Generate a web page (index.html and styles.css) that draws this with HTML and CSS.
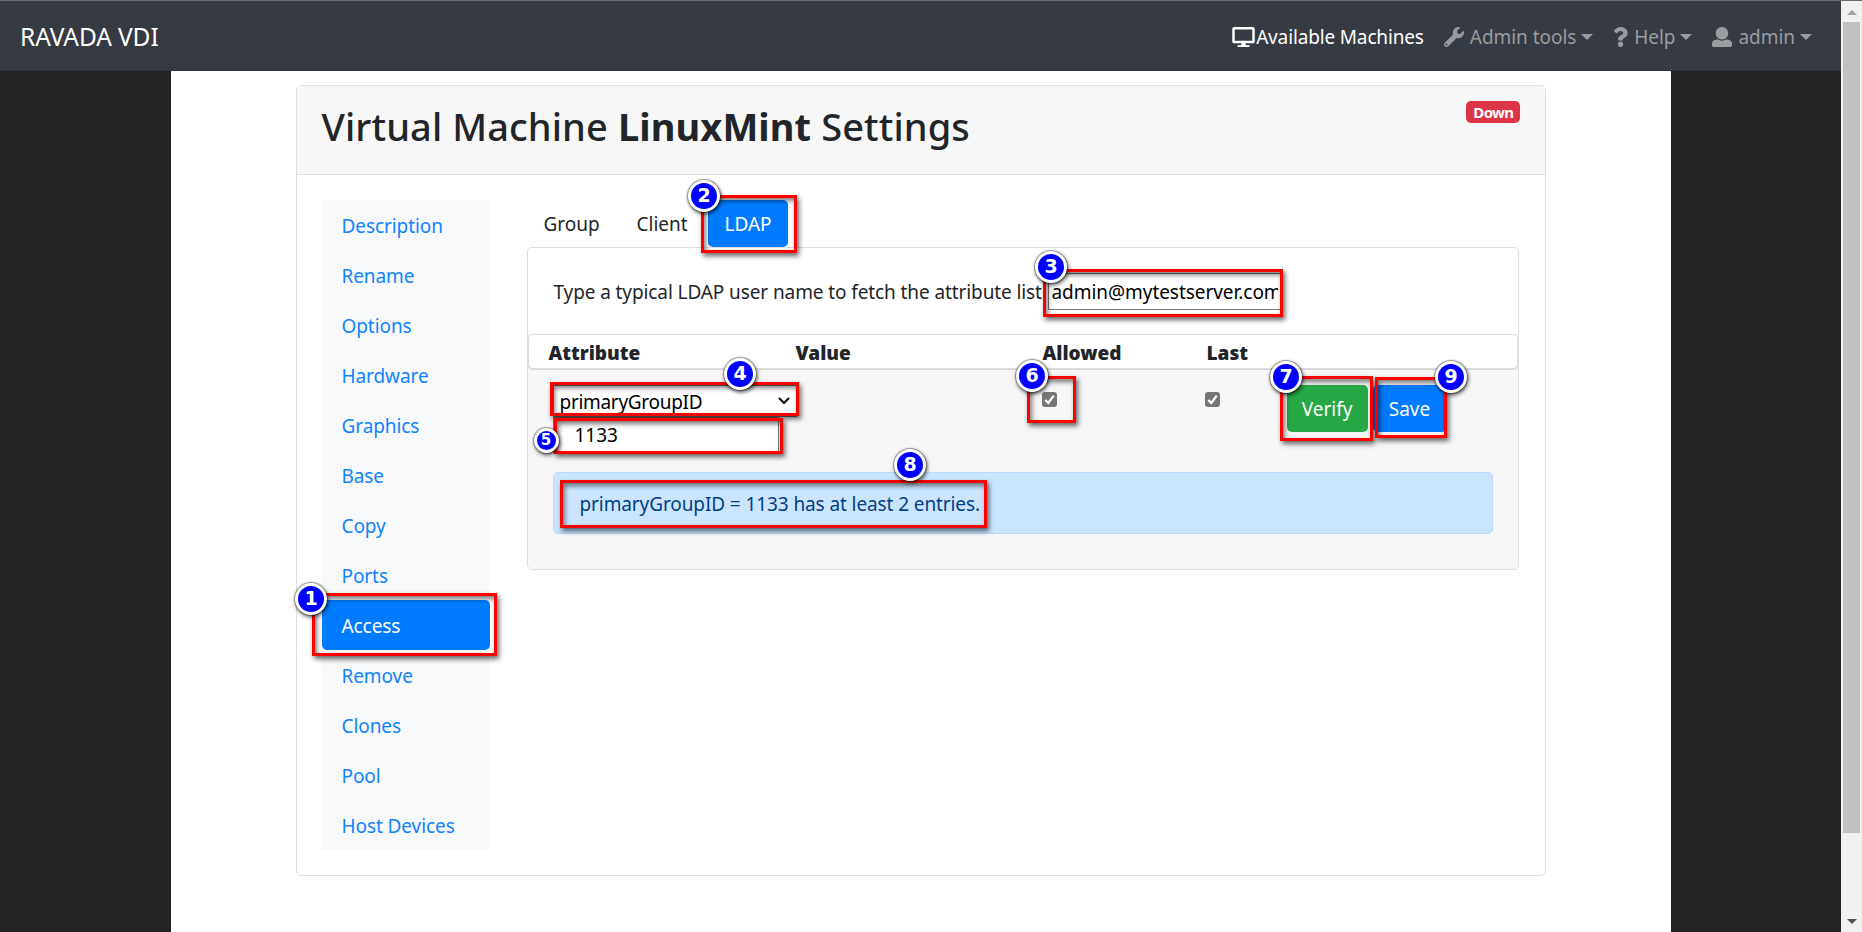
FILE: index.html
```html
<!DOCTYPE html>
<html lang="en">
<head>
<meta charset="utf-8">
<title>Ravada VDI</title>
<link rel="stylesheet" href="styles.css">
</head>
<body>
<div class="viewport">
  <div class="page">
    <nav class="navbar">
      <a class="brand">RAVADA VDI</a>
      <div class="menu">
        <a class="item active"><svg class="ico desktop" viewBox="0 0 576 512"><path d="M528 0H48C21.5 0 0 21.5 0 48v320c0 26.500 21.500 48 48 48h192l-16 48h-72c-13.300 0-24 10.700-24 24s10.700 24 24 24h272c13.300 0 24-10.700 24-24s-10.700-24-24-24h-72l-16-48h192c26.500 0 48-21.500 48-48V48c0-26.500-21.500-48-48-48zm-16 352H64V64h448v288z"/></svg><span>Available Machines</span></a>
        <a class="item"><svg class="ico wrench" viewBox="0 0 512 512"><path d="M507.730 109.100c-2.240-9.030-13.540-12.090-20.120-5.510l-74.360 74.360-67.880-11.310-11.310-67.880 74.360-74.360c6.620-6.620 3.430-17.900-5.660-20.160-47.380-11.740-99.550.910-136.580 37.930-39.640 39.640-50.550 97.100-34.050 147.200L18.740 402.760c-24.990 24.990-24.990 65.510 0 90.500 24.990 24.990 65.510 24.990 90.500 0l213.210-213.210c50.120 16.710 107.470 5.680 147.370-34.220 37.070-37.070 49.700-89.320 37.910-136.730zM64 472c-13.250 0-24-10.750-24-24 0-13.260 10.750-24 24-24s24 10.740 24 24c0 13.250-10.750 24-24 24z"/></svg><span>Admin tools</span><i class="caret"></i></a>
        <a class="item"><svg class="ico question" viewBox="0 0 384 512"><path d="M202.021 0C122.202 0 70.503 32.703 29.914 91.026c-7.363 10.580-5.093 25.086 5.178 32.874l43.138 32.709c10.373 7.865 25.132 6.026 33.253-4.148 25.049-31.381 43.630-49.449 82.757-49.449 30.764 0 68.816 19.799 68.816 49.631 0 22.552-18.617 34.134-48.993 51.164-35.423 19.860-82.299 44.576-82.299 106.405V320c0 13.255 10.745 24 24 24h72.471c13.255 0 24-10.745 24-24v-5.773c0-42.860 125.268-44.645 125.268-160.627C377.504 66.256 286.902 0 202.021 0zM192 373.459c-38.196 0-69.271 31.075-69.271 69.271 0 38.195 31.075 69.270 69.271 69.270s69.271-31.075 69.271-69.271-31.075-69.270-69.271-69.270z"/></svg><span>Help</span><i class="caret"></i></a>
        <a class="item"><svg class="ico user" viewBox="0 0 512 512"><path d="M256 0c88.366 0 160 71.634 160 160s-71.634 160-160 160S96 248.366 96 160 167.634 0 256 0zm183.283 333.821l-71.313-17.828c-74.923 53.890-165.738 41.864-223.940 0l-71.313 17.828C29.981 344.505 0 382.903 0 426.955V464c0 26.510 21.490 48 48 48h416c26.510 0 48-21.490 48-48v-37.045c0-44.052-29.981-82.450-72.717-93.134z"/></svg><span>admin</span><i class="caret"></i></a>
      </div>
    </nav>
    <main class="container">
      <section class="card">
        <header class="card-header">
          <h2 class="title">Virtual Machine <b>LinuxMint</b> Settings</h2>
          <span class="badge">Down</span>
        </header>
        <div class="card-body">
          <div class="side">
            <a class="side-link">Description</a>
            <a class="side-link">Rename</a>
            <a class="side-link">Options</a>
            <a class="side-link">Hardware</a>
            <a class="side-link">Graphics</a>
            <a class="side-link">Base</a>
            <a class="side-link">Copy</a>
            <a class="side-link">Ports</a>
            <a class="side-link selected">Access</a>
            <a class="side-link">Remove</a>
            <a class="side-link">Clones</a>
            <a class="side-link">Pool</a>
            <a class="side-link">Host Devices</a>
          </div>
          <div class="content">
            <div class="tabs">
              <a class="tab t-group">Group</a><a class="tab t-client">Client</a><a class="tab selected">LDAP</a>
            </div>
            <div class="panel">
              <div class="fetch"><label class="t-fetch">Type a typical LDAP user name to fetch the attribute list</label><div class="field user-field"><span class="t-user">admin@mytestserver.com</span></div></div>
              <div class="columns"><b>Attribute</b><b>Value</b><b>Allowed</b><b>Last</b></div>
              <div class="rules">
                <div class="rule">
                  <div class="attribute">
                    <div class="field select"><span>primaryGroupID</span><svg class="chevron" viewBox="0 0 12 8"><path d="M1 1l5 5 5-5"/></svg></div>
                    <div class="field value">1133</div>
                  </div>
                  <div class="cell"><span class="check"><svg viewBox="0 0 15 15"><path d="M3.300 8l3 3 5.400-7.400"/></svg></span></div>
                  <div class="cell"><span class="check"><svg viewBox="0 0 15 15"><path d="M3.300 8l3 3 5.400-7.400"/></svg></span></div>
                  <div class="actions"><a class="btn verify">Verify</a><a class="btn save">Save</a></div>
                </div>
                <div class="alert"><span>primaryGroupID = 1133 has at least 2 entries.</span></div>
              </div>
            </div>
          </div>
        </div>
      </section>
    </main>
  </div>
  <div class="scrollbar"><i class="up"></i><i class="thumb"></i><i class="down"></i></div>

  <div class="frame f1"></div><div class="frame f2"></div><div class="frame f3"></div>
  <div class="frame f4"></div><div class="frame f5"></div><div class="frame f6"></div>
  <div class="frame f7"></div><div class="frame f8"></div><div class="frame f9"></div>
  <span class="dot d1">1</span><span class="dot d2">2</span><span class="dot d3">3</span>
  <span class="dot d4">4</span><span class="dot small d5">5</span><span class="dot d6">6</span>
  <span class="dot d7">7</span><span class="dot d8">8</span><span class="dot d9">9</span>
</div>
</body>
</html>
```
FILE: styles.css
```css
* { box-sizing: border-box; }
body { margin: 0; font: 19px/30px "Noto Sans", "Open Sans", sans-serif; color: #212529; background: #222; }
.viewport { position: relative; display: flex; width: 1862px; height: 932px; overflow: hidden; }
.page { width: 1841px; display: flex; flex-direction: column; }
a, label, span, b { white-space: nowrap; }

/* Top navigation */
.navbar { height: 71px; background: #363a42; border-top: 1px solid #6a6a68; border-bottom: 1px solid #30343a; padding: 2px 29px 0 20px; display: flex; align-items: center; justify-content: space-between; color: #9a9c9f; }
.brand { color: #fff; font-size: 24.500px; letter-spacing: -.1px; }
.menu { display: flex; gap: 20px; align-items: center; letter-spacing: -.05px; }
.item { display: flex; align-items: center; }
.active { color: #fff; letter-spacing: -.15px; }
.ico { height: 20px; fill: currentColor; margin-right: 6px; }
.desktop { width: 23px; margin-right: 1px; }
.wrench, .user { width: 20px; }
.question { width: 15px; }
.caret { border: 6px solid transparent; border-top-color: currentColor; border-bottom: 0; margin-left: 5px; }

/* Card */
.container { flex: 1; width: 1500px; margin: 0 auto; padding: 14px 125px 0; background: #fff; }
.card { border: 1px solid #dfdfdf; border-radius: 5px; height: 791px; }
.card-header { height: 89px; background: #f7f7f7; border-bottom: 1px solid #dfdfdf; border-radius: 4px 4px 0 0; padding: 15px 25px 0; display: flex; justify-content: space-between; align-items: flex-start; }
.title { margin: 1px 0 0; font-size: 38px; letter-spacing: .1px; line-height: 48px; font-weight: 500; white-space: nowrap; }
.badge { height: 22px; background: #dc3545; color: #fff; border-radius: 5px; padding: 0 6px 0 7px; font-size: 15px; letter-spacing: -.6px; line-height: 22px; font-weight: 700; }
.card-body { display: flex; gap: 37px; padding: 25px; }
.side { width: 168px; height: 650px; background: #f8f9fa; }
.side-link { display: block; height: 50px; padding: 11px 20px 9px; color: #007bff; opacity: .93; letter-spacing: -.08px; }
.side-link.selected { background: #007bff; color: #fff; border-radius: 5px; opacity: 1; }

/* Tabs and panel */
.content { width: 992px; }
.tabs { display: flex; height: 47px; }
.tab { height: 47px; padding: 10px 16px 8px 17px; line-height: 29px; }
.t-group { width: 93px; }
.t-client { width: 88px; }
.tab.selected { width: 80px; background: #007bff; color: #fff; border-radius: 5px; }
.panel { height: 323px; border: 1px solid #dfdfdf; border-radius: 5px; background: #f7f7f7; overflow: hidden; }
.fetch { height: 86px; padding: 25px 0 0 26px; display: flex; background: #fff; }
.t-fetch { width: 494px; line-height: 39px; letter-spacing: -.1px; }
.field { background: #fff; border: 1px solid #767676; color: #000; }
.user-field { width: 234px; height: 37px; padding: 0 3px; line-height: 37px; letter-spacing: -.05px; }
.t-user { display: block; overflow: hidden; height: 35px; width: 226px; }
.columns { height: 35px; border: 1px solid #dfdfdf; border-radius: 5px; background: #fff; padding-left: 20px; display: grid; grid-template-columns: 247px 247px 164px 1fr; line-height: 37px; box-shadow: 0 1px #d6d6d6; font-weight: 800; }
.rules { padding: 16px 25px 0; }
.rule { height: 87px; display: grid; grid-template-columns: 489px 163px 82px 1fr; }
.select { width: 244px; height: 32px; padding: 2px 6px 0; display: flex; justify-content: space-between; align-items: center; line-height: 30px; letter-spacing: -.3px; }
.chevron { width: 12px; height: 8px; margin-bottom: 2px; fill: none; stroke: #000; stroke-width: 2; }
.value { width: 226px; height: 36px; padding-left: 21px; line-height: 34px; }
.cell { padding-top: 7px; }
.check { display: block; width: 15px; height: 15px; background: #767676; border-radius: 3px; }
.check svg { display: block; fill: none; stroke: #fff; stroke-width: 2.300; }
.actions { display: flex; gap: 5px; }
.btn { height: 47px; border-radius: 5px; color: #fff; line-height: 49px; text-align: center; }
.verify { width: 81px; background: #28a745; }
.save { width: 74px; background: #007bff; }
.alert { height: 62px; background: #cce5ff; border: 1px solid #b8daff; border-radius: 5px; padding: 0 26px; color: #004085; line-height: 62px; letter-spacing: -.1px; }

/* Scrollbar */
.scrollbar { width: 21px; background: #f1f1f1; border-top: 1px solid #6a6a68; display: flex; flex-direction: column; align-items: center; }
.up { margin-top: 9px; border: 5px solid transparent; border-top: 0; border-bottom-color: #a3a3a3; }
.thumb { margin-top: 7px; width: 17px; height: 811px; background: #c1c1c1; }
.down { margin-top: 86px; border: 5px solid transparent; border-bottom: 0; border-top-color: #505050; }

/* Callout frames and numbered markers */
.frame { position: absolute; border: 3px solid #f00; box-shadow: 2px 3px 5px rgba(0,0,0,.6), inset 2px 3px 5px rgba(0,0,0,.5); }
.f1 { left: 312px; top: 593px; width: 185px; height: 63px; }
.f2 { left: 701px; top: 195px; width: 96px; height: 58px; }
.f3 { left: 1043px; top: 269px; width: 240px; height: 48px; }
.f4 { left: 550px; top: 382px; width: 249px; height: 34px; }
.f5 { left: 554px; top: 418px; width: 229px; height: 36px; }
.f6 { left: 1027px; top: 376px; width: 49px; height: 47px; }
.f7 { left: 1280px; top: 376px; width: 93px; height: 65px; }
.f8 { left: 560px; top: 480px; width: 427px; height: 48px; }
.f9 { left: 1375px; top: 377px; width: 72px; height: 61px; }
.dot { position: absolute; width: 32px; height: 32px; margin: -16px 0 0 -16px; border: 3.500px solid #fff; border-radius: 50%; background: #00f; color: #fff; font: 700 19px/25px "DejaVu Sans", sans-serif; text-align: center; box-shadow: 1px 2px 4px rgba(0,0,0,.7), 0 0 1px 1px rgba(0,0,0,.35); }
.dot.small { width: 25px; height: 25px; margin: -12.500px 0 0 -12.500px; border-width: 3px; font-size: 15px; line-height: 19px; }
.d1 { left: 311px; top: 599px; }
.d2 { left: 704px; top: 196px; }
.d3 { left: 1051px; top: 267px; }
.d4 { left: 740px; top: 374px; }
.d5 { left: 546px; top: 440px; }
.d6 { left: 1032px; top: 376px; }
.d7 { left: 1286px; top: 377px; }
.d8 { left: 910px; top: 465px; }
.d9 { left: 1451px; top: 377px; }
```
